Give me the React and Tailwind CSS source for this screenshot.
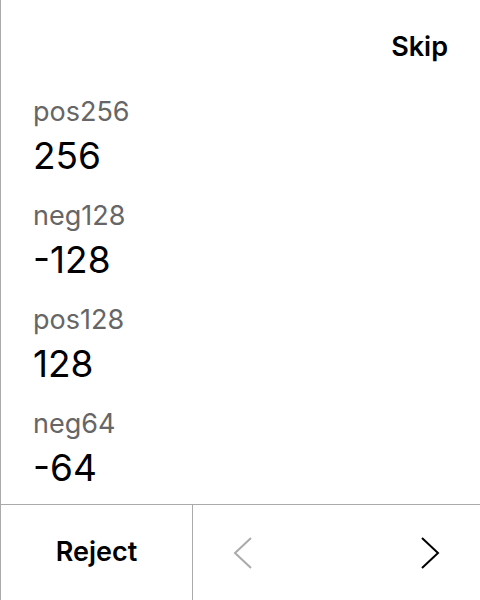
const rows = [
  { label: "pos256", value: "256" },
  { label: "neg128", value: "-128" },
  { label: "pos128", value: "128" },
  { label: "neg64", value: "-64" },
];

function Chevron({ dir, className }) {
  const points = dir === "left" ? "18,2 2,17 18,32" : "2,2 18,17 2,32";
  return (
    <svg width="20" height="34" viewBox="0 0 20 34" className={className}>
      <polyline points={points} fill="none" stroke="currentColor" strokeWidth="2" />
    </svg>
  );
}

function App() {
  return (
    <div
      className="w-[480px] h-[600px] bg-white border-l border-[#aaaaaa] flex flex-col text-black"
      style={{ fontFamily: "Inter, 'Noto Sans', sans-serif" }}
    >
      <div className="flex justify-end pt-[29px] pr-[32px]">
        <button className="text-[27px] font-semibold leading-[36px]">Skip</button>
      </div>
      <div className="flex-1 flex flex-col pl-[32px] pt-[29px] gap-[16px]">
        {rows.map((row) => (
          <div key={row.label} className="flex flex-col">
            <div className="text-[27px] leading-[36px] text-[#666666]">{row.label}</div>
            <div className="text-[37px] leading-[52px]">{row.value}</div>
          </div>
        ))}
      </div>
      <div className="h-[96px] border-t border-[#aaaaaa] flex">
        <button className="w-[192px] border-r border-[#aaaaaa] text-[27px] font-semibold">
          Reject
        </button>
        <div className="flex-1 flex justify-between items-center">
          <button className="w-[100px] h-full flex items-center justify-center text-[#aaaaaa]">
            <Chevron dir="left" />
          </button>
          <button className="w-[100px] h-full flex items-center justify-center">
            <Chevron dir="right" />
          </button>
        </div>
      </div>
    </div>
  );
}

export default App;
